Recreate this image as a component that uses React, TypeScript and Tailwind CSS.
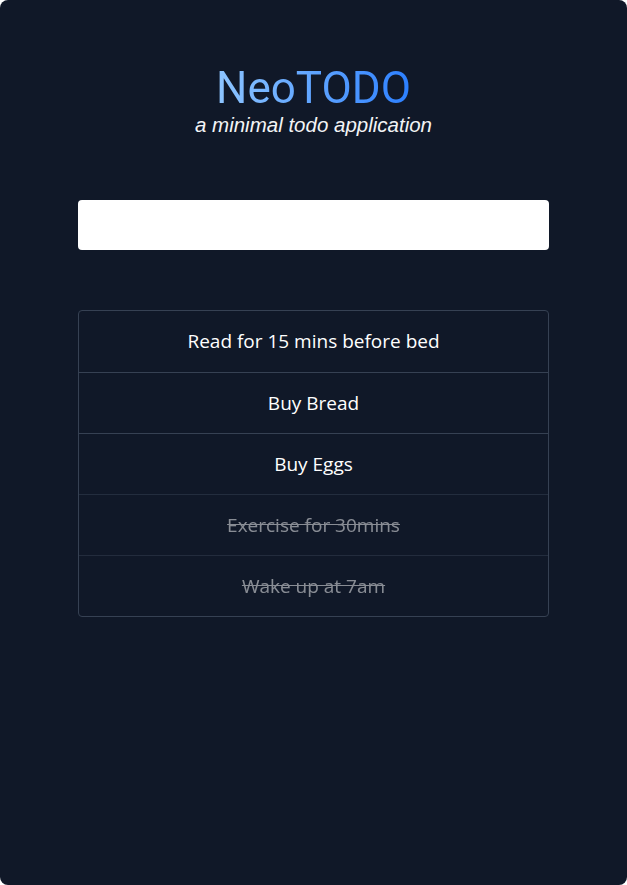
const todos = [
  { text: 'Read for 15 mins before bed', done: false },
  { text: 'Buy Bread', done: false },
  { text: 'Buy Eggs', done: false },
  { text: 'Exercise for 30mins', done: true },
  { text: 'Wake up at 7am', done: true },
]

function TodoItem({ text, done }: { text: string; done: boolean }) {
  return (
    <li
      className={`h-[61px] flex items-center justify-center border-t border-gray-700 first:border-t-0 text-[19px] font-['Open_Sans',sans-serif] ${
        done ? 'opacity-50 line-through' : ''
      }`}
    >
      {text}
    </li>
  )
}

export default function App() {
  return (
    <div className="bg-white">
      <div className="h-[885px] bg-gray-900 rounded-lg text-white flex flex-col items-center">
        <h1 className="mt-[62px] text-[44px] leading-[52px] font-['Roboto',sans-serif] bg-gradient-to-r from-blue-300 to-blue-500 bg-clip-text text-transparent">
          NeoTODO
        </h1>
        <p className="-mt-px text-[20.5px] italic leading-6 font-['Liberation_Sans',Arial,sans-serif] text-gray-100">
          a minimal todo application
        </p>
        <input className="mt-[63px] w-[471px] h-[50px] bg-white rounded text-gray-900 px-3 outline-none" />
        <ul className="mt-[60px] w-[471px] border border-gray-700 rounded">
          {todos.map((t) => (
            <TodoItem key={t.text} {...t} />
          ))}
        </ul>
      </div>
    </div>
  )
}
